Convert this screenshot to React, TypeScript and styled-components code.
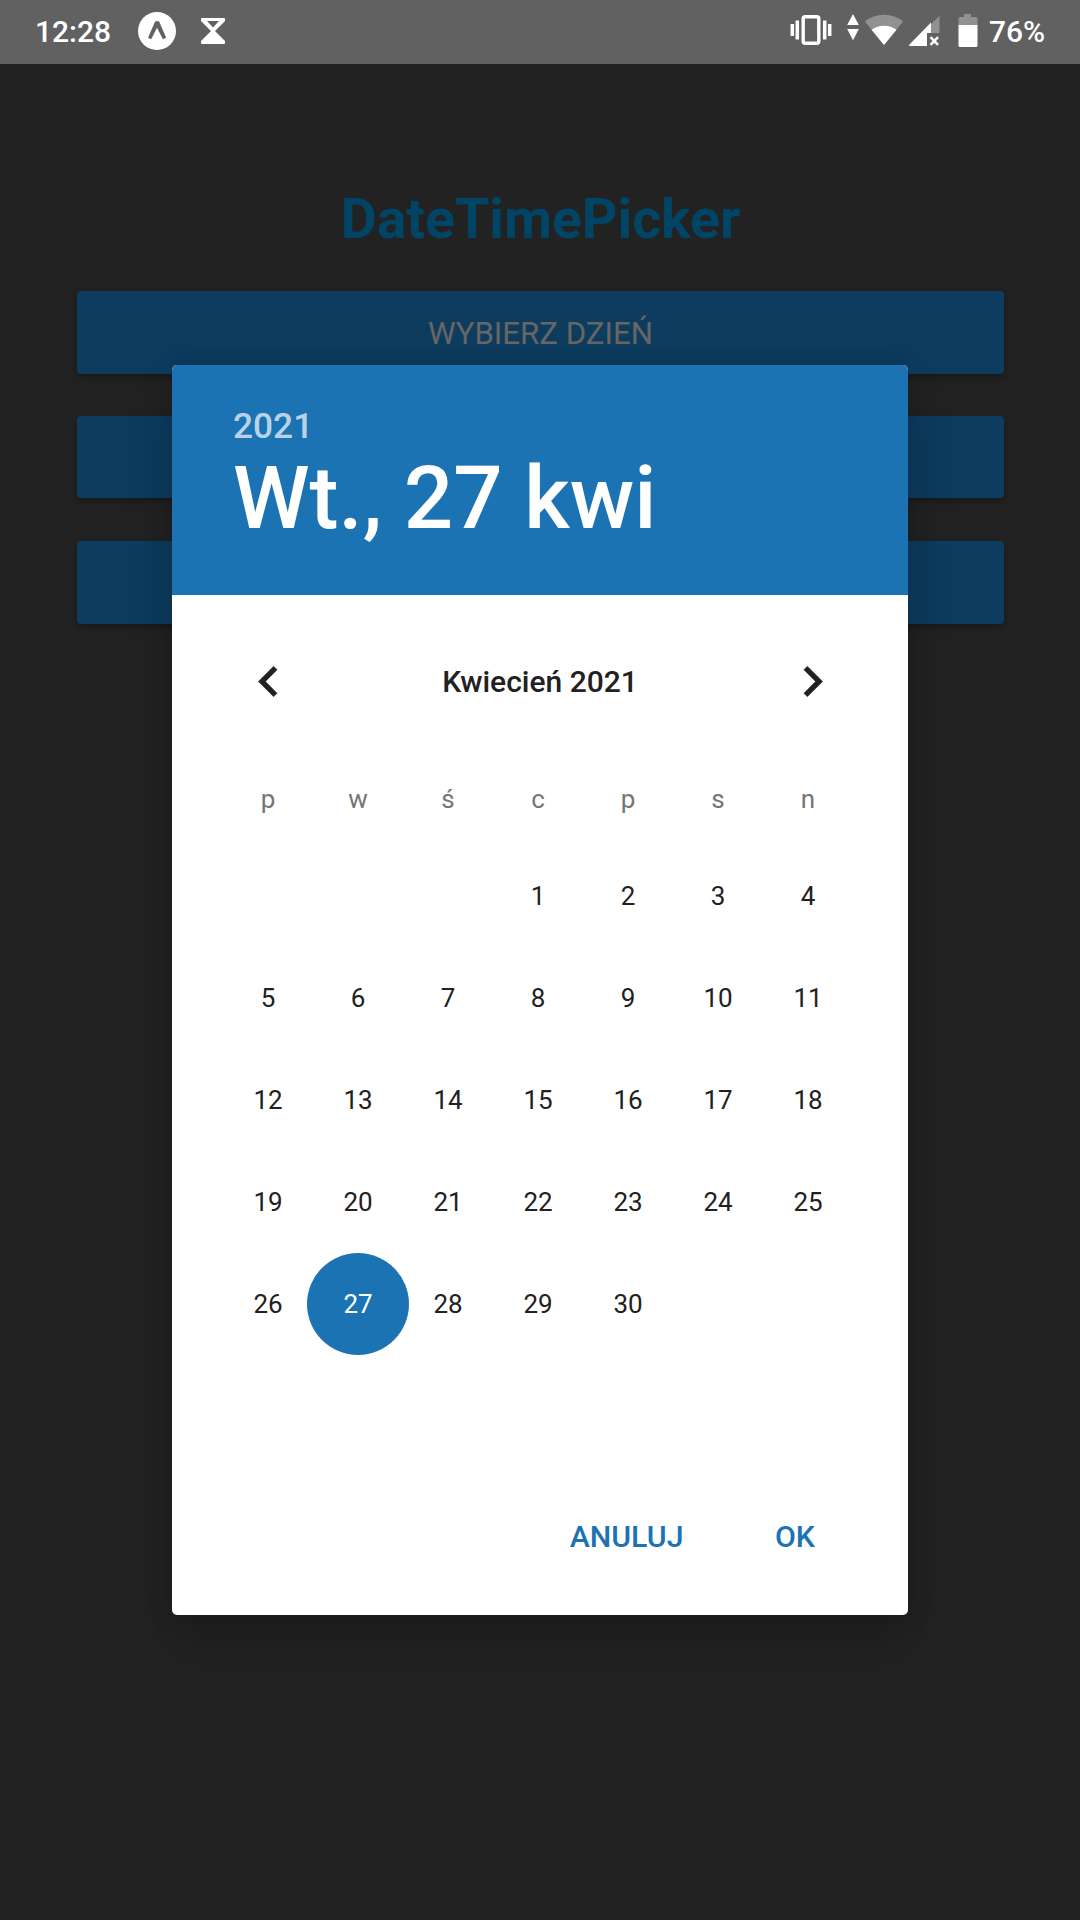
import React from 'react';
import styled, { createGlobalStyle } from 'styled-components';

const ACCENT = '#1c73b4';
const SURFACE = '#222222';

const GlobalStyle = createGlobalStyle`
  html, body { margin: 0; padding: 0; background: ${SURFACE}; }
  body { font-family: Roboto, "Noto Sans", sans-serif; }
  button { font-family: inherit; border: 0; padding: 0; background: none; }
`;

const Screen = styled.div`
  position: relative;
  display: flex;
  flex-direction: column;
  width: 1080px;
  height: 1920px;
  overflow: hidden;
  background: ${SURFACE};
`;

const StatusBar = styled.header`
  display: flex;
  justify-content: space-between;
  box-sizing: border-box;
  height: 64px;
  padding: 0 35px;
  background: #616161;
  color: #fff;
`;

const StatusGroup = styled.div`
  display: flex;
  align-items: center;
`;

const StatusText = styled.span<{ $width: number; $gap?: number }>`
  width: ${({ $width }) => $width}px;
  margin-left: ${({ $gap = 0 }) => $gap}px;
  font-size: 30px;
  font-weight: 500;
  line-height: 64px;
  white-space: nowrap;
`;

const StatusIcon = styled.svg<{ $gap: number }>`
  display: block;
  flex: none;
  height: 64px;
  margin-left: ${({ $gap }) => $gap}px;
`;

const Page = styled.main`
  display: flex;
  flex-direction: column;
  padding: 0 76px 0 77px;
`;

const PageTitle = styled.h1`
  margin: 123px 0 39px;
  color: #004466;
  font-size: 55.4px;
  font-weight: 700;
  line-height: 65px;
  text-align: center;
`;

const ButtonStack = styled.div`
  display: grid;
  grid-template-rows: 83px 82px 83px;
  row-gap: 42.4px;
`;

const PageButton = styled.button`
  border-radius: 4px;
  background: #0d3c5f;
  box-shadow: 0 3px 7px rgba(0, 0, 0, 0.28);
  color: #666666;
  font-size: 31.2px;
  line-height: 36px;
  padding-top: 3px;
`;

const Overlay = styled.div`
  position: absolute;
  inset: 0;
  display: flex;
  justify-content: center;
  align-items: flex-start;
  padding-top: 365px;
`;

const Dialog = styled.section`
  display: flex;
  flex-direction: column;
  width: 736px;
  height: 1250px;
  overflow: hidden;
  border-radius: 5px;
  background: #fff;
  box-shadow: 0 30px 52px rgba(0, 0, 0, 0.16), 0 0 30px rgba(0, 0, 0, 0.12);
`;

const DialogHeader = styled.div`
  display: flex;
  flex-direction: column;
  box-sizing: border-box;
  height: 230px;
  padding: 40px 61px 0;
  background: ${ACCENT};
  color: #fff;
`;

const Year = styled.span`
  color: rgba(255, 255, 255, 0.7);
  font-size: 35.3px;
  font-weight: 500;
  line-height: 42px;
`;

const SelectedDate = styled.span`
  font-size: 87px;
  font-weight: 500;
  line-height: 103px;
  white-space: nowrap;
`;

const MonthBar = styled.div`
  display: flex;
  align-items: center;
  justify-content: space-between;
  height: 61px;
  margin: 56px 65px 0 66px;
  color: #212121;
`;

const MonthLabel = styled.span`
  margin-right: 1px;
  font-size: 30px;
  font-weight: 500;
  line-height: 61px;
`;

const ArrowButton = styled.button`
  display: flex;
  width: 61px;
  height: 61px;
  color: #212121;
`;

const Weekdays = styled.div`
  display: grid;
  grid-template-columns: repeat(7, 90px);
  height: 60px;
  margin: 57px 0 0 51px;
`;

const Weekday = styled.span`
  color: #757575;
  font-size: 26px;
  line-height: 60px;
  text-align: center;
`;

const DayGrid = styled.div`
  display: grid;
  grid-template-columns: repeat(7, 90px);
  grid-auto-rows: 102px;
  justify-items: center;
  margin: 16px 0 0 51px;
`;

const Day = styled.span<{ $selected: boolean }>`
  width: 102px;
  height: 102px;
  border-radius: 50%;
  background: ${({ $selected }) => ($selected ? ACCENT : 'transparent')};
  color: ${({ $selected }) => ($selected ? '#fff' : '#212121')};
  font-size: 26px;
  line-height: 102px;
  text-align: center;
`;

const Actions = styled.div`
  display: flex;
  justify-content: flex-end;
  gap: 91.5px;
  margin: auto 93px 48px 0;
`;

const ActionButton = styled.button`
  color: ${ACCENT};
  font-size: 30.3px;
  font-weight: 500;
  line-height: 60px;
`;

const weekdays = ['p', 'w', 'ś', 'c', 'p', 's', 'n'];
const firstOffset = 3;
const selectedDay = 27;
const days = Array.from({ length: 30 }, (_, i) => i + 1);

export default function App() {
  return (
    <>
      <GlobalStyle />
      <Screen>
        <StatusBar>
          <StatusGroup>
            <StatusText $width={76}>12:28</StatusText>
            <StatusIcon $gap={27} width="38" viewBox="0 0 38 64">
              <circle cx="19" cy="31" r="19" fill="#fff" />
              <path d="M10 37.7 17.2 21.3h3.8l7.2 16.4-3.3 1.6-5.9-11.5-5.8 11.5z" fill="#616161" />
            </StatusIcon>
            <StatusIcon $gap={25} width="24" viewBox="0 0 24 64">
              <path
                fillRule="evenodd"
                fill="#fff"
                d="M1 18h22a1 1 0 0 1 1 1v2L14 31l10 10v2a1 1 0 0 1-1 1H1a1 1 0 0 1-1-1v-2l10-10L0 21v-2a1 1 0 0 1 1-1zM6 21l6 6.500 6-6.500z"
              />
            </StatusIcon>
          </StatusGroup>
          <StatusGroup>
            <StatusIcon $gap={0} width="42" viewBox="0 0 42 64">
              <rect x="13.200" y="16.800" width="15.600" height="26.400" rx="2" fill="none" stroke="#fff" strokeWidth="3.400" />
              <path d="M2.300 24v12M7.300 20.500v19M34.700 20.500v19M39.700 24v12" stroke="#fff" strokeWidth="3.500" />
            </StatusIcon>
            <StatusIcon $gap={15} width="12" viewBox="0 0 12 64">
              <path d="M6 14 11.800 25H.2zM.2 29h11.600L6 40.300z" fill="#fff" />
            </StatusIcon>
            <StatusIcon $gap={6} width="38" viewBox="0 0 38 64">
              <path d="M19 45 0 21.500Q8 14.800 19 14.800T38 21.500z" fill="#919191" />
              <path d="M19 45 6.500 29.800Q12 25.800 19 25.800T31.500 29.800z" fill="#fff" />
            </StatusIcon>
            <StatusIcon $gap={6} width="31" viewBox="0 0 31 64">
              <path d="M30.500 16v17H18V28z" fill="#919191" />
              <path d="M.5 46 0 45 22 22.500V33H18v13z" fill="#fff" />
              <path d="m21.500 37.200 7.500 7.600m0-7.600-7.500 7.600" stroke="#fff" strokeWidth="2.600" />
            </StatusIcon>
            <StatusIcon $gap={18} width="20" viewBox="0 0 20 64">
              <path d="M6 14h7v3h5q1.500 0 1.500 1.500V26h-19v-7.500Q.5 17 2 17h4z" fill="#919191" />
              <path d="M.5 25h19v20.500q0 1.500-1.500 1.500H2Q.5 47 .5 45.500z" fill="#fff" />
            </StatusIcon>
            <StatusText $gap={11} $width={56}>
              76%
            </StatusText>
          </StatusGroup>
        </StatusBar>
        <Page>
          <PageTitle>DateTimePicker</PageTitle>
          <ButtonStack>
            <PageButton>WYBIERZ DZIEŃ</PageButton>
            <PageButton />
            <PageButton />
          </ButtonStack>
        </Page>
        <Overlay>
          <Dialog>
            <DialogHeader>
              <Year>2021</Year>
              <SelectedDate>Wt., 27 kwi</SelectedDate>
            </DialogHeader>
            <MonthBar>
              <ArrowButton>
                <svg width="61" height="61" viewBox="0 0 24 24">
                  <path d="M15.410 7.410 14 6l-6 6 6 6 1.410-1.410L10.830 12z" fill="currentColor" stroke="currentColor" strokeWidth="0.150" />
                </svg>
              </ArrowButton>
              <MonthLabel>Kwiecień 2021</MonthLabel>
              <ArrowButton>
                <svg width="61" height="61" viewBox="0 0 24 24">
                  <path d="M10 6 8.590 7.410 13.170 12l-4.580 4.590L10 18l6-6z" fill="currentColor" stroke="currentColor" strokeWidth="0.150" />
                </svg>
              </ArrowButton>
            </MonthBar>
            <Weekdays>
              {weekdays.map((name, i) => (
                <Weekday key={i}>{name}</Weekday>
              ))}
            </Weekdays>
            <DayGrid>
              {Array.from({ length: firstOffset }, (_, i) => (
                <span key={`blank-${i}`} />
              ))}
              {days.map((day) => (
                <Day key={day} $selected={day === selectedDay}>
                  {day}
                </Day>
              ))}
            </DayGrid>
            <Actions>
              <ActionButton>ANULUJ</ActionButton>
              <ActionButton>OK</ActionButton>
            </Actions>
          </Dialog>
        </Overlay>
      </Screen>
    </>
  );
}
